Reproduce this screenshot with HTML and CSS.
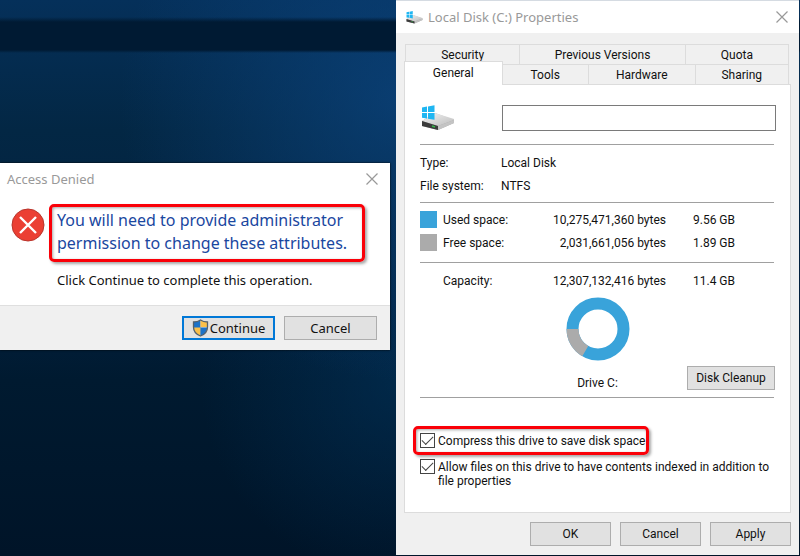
FILE: index.html
```html
<!DOCTYPE html>
<html lang="en">
<head>
<meta charset="utf-8">
<title>Local Disk (C:) Properties</title>
<link rel="stylesheet" href="styles.css">
</head>
<body>
<svg class="defs" aria-hidden="true">
  <defs>
    <linearGradient id="metal" x1="0" y1="0" x2="1" y2="1">
      <stop offset="0" stop-color="#f4f4f4"/><stop offset="1" stop-color="#bdbdbd"/>
    </linearGradient>
    <symbol id="drive" viewBox="0 0 34 26">
      <path d="M1 16 L14 8 L33 15 L33 18 L17 25 L1 21Z" fill="#aaa"/>
      <path d="M1 16 L14 8 L33 14 L33 15 L17 21Z" fill="url(#metal)"/>
      <path d="M17 21 L33 15 L33 18 L17 25Z" fill="#c4c4c4"/>
      <path d="M1 16 L17 21 L17 25 L1 21Z" fill="#3c3c3c"/>
      <path d="M11 21 L14 22" stroke="#35b54a" stroke-width="1.5"/>
      <path d="M1 2.5 L6 1.6 V7 H1Z M7 1.4 L13.500 0.200 V7 H7Z M1 8 H6 V13.500 L1 12.800Z M7 8 H13.500 V14.800 L7 13.700Z" fill="#1fb6f2"/>
    </symbol>
    <symbol id="close" viewBox="0 0 12 12">
      <path d="M.5 .5 L11.500 11.500 M11.500 .5 L.5 11.500" stroke="#999" stroke-width="1.200" fill="none"/>
    </symbol>
  </defs>
</svg>
<main class="desktop">
  <section class="window dialog" aria-label="Access Denied">
    <header class="dialog-title">
      <h1>Access Denied</h1>
      <button class="close" aria-label="Close"><svg><use href="#close"/></svg></button>
    </header>
    <div class="message">
      <svg class="error" viewBox="0 0 34 34" aria-hidden="true">
        <circle cx="17" cy="17" r="16" fill="#eb3f33" stroke="#b9352c"/>
        <path d="M9 9 L25 25 M25 9 L9 25" stroke="#fff" stroke-width="2.400"/>
      </svg>
      <div>
        <p class="headline highlight">You will need to provide administrator<br>permission to change these attributes.</p>
        <p class="detail">Click Continue to complete this operation.</p>
      </div>
    </div>
    <footer class="dialog-actions">
      <button class="button primary">
        <svg class="shield" viewBox="0 0 16 18" aria-hidden="true">
          <path d="M8 1 C6 2.500 4 3 1 3 V8 C1 12 4 15.500 8 17Z" fill="#1c72c8"/>
          <path d="M8 1 C10 2.500 12 3 15 3 V8 H8Z" fill="#fbc04a"/>
          <path d="M1 8.500 H8 V17 C4 15.500 1.300 12 1 8.500Z" fill="#fbc04a"/>
          <path d="M8 8.500 H15 C14.700 12 12 15.500 8 17Z" fill="#1c72c8"/>
          <path d="M8 1 C6 2.500 4 3 1 3 V8 C1 12 4 15.500 8 17 C12 15.500 15 12 15 8 V3 C12 3 10 2.500 8 1Z" fill="none" stroke="#54616c" stroke-width="1.300"/>
        </svg>Continue</button>
      <button class="button">Cancel</button>
    </footer>
  </section>

  <section class="window properties" aria-label="Local Disk (C:) Properties">
    <header class="prop-title">
      <svg class="drive-small" aria-hidden="true"><use href="#drive"/></svg>
      <h2>Local Disk (C:) Properties</h2>
      <button class="close" aria-label="Close"><svg><use href="#close"/></svg></button>
    </header>
    <div class="prop-body">
      <nav class="tabs" role="tablist">
        <div class="tab-row back">
          <button role="tab">Security</button><button role="tab">Previous Versions</button><button role="tab">Quota</button>
        </div>
        <div class="tab-row front">
          <button role="tab" aria-selected="true" class="active">General</button><button role="tab">Tools</button><button role="tab">Hardware</button><button role="tab">Sharing</button>
        </div>
      </nav>
      <div class="panel" role="tabpanel">
        <div class="name-row">
          <svg class="drive-large" aria-hidden="true"><use href="#drive"/></svg>
          <input type="text" aria-label="Volume label">
        </div>
        <hr>
        <dl class="facts">
          <dt>Type:</dt><dd>Local Disk</dd>
          <dt>File system:</dt><dd>NTFS</dd>
        </dl>
        <hr>
        <table class="space">
          <tr><td class="key"><span class="swatch used"></span></td><th>Used space:</th><td class="bytes">10,275,471,360 bytes</td><td class="size">9.56 GB</td></tr>
          <tr><td class="key"><span class="swatch free"></span></td><th>Free space:</th><td class="bytes">2,031,661,056 bytes</td><td class="size">1.89 GB</td></tr>
        </table>
        <hr>
        <table class="space capacity">
          <tr><td class="key"></td><th>Capacity:</th><td class="bytes">12,307,132,416 bytes</td><td class="size">11.4 GB</td></tr>
        </table>
        <div class="chart">
          <svg class="donut" viewBox="0 0 64 64" aria-hidden="true">
            <circle cx="32" cy="32" r="25.500" fill="none" stroke="#39a3da" stroke-width="12"/>
            <path d="M6.500 32 A25.500 25.500 0 0 0 19.250 54.080" fill="none" stroke="#ababab" stroke-width="12"/>
          </svg>
          <div class="drive-row">
            <span class="drive-name">Drive C:</span>
            <button class="button cleanup">Disk Cleanup</button>
          </div>
        </div>
        <hr>
        <div class="options">
          <label class="option highlight"><input type="checkbox" checked><span>Compress this drive to save disk space</span></label>
          <label class="option"><input type="checkbox" checked><span>Allow files on this drive to have contents indexed in addition to<br>file properties</span></label>
        </div>
      </div>
      <footer class="prop-actions">
        <button class="button">OK</button>
        <button class="button">Cancel</button>
        <button class="button">Apply</button>
      </footer>
    </div>
  </section>
</main>
</body>
</html>
```
FILE: styles.css
```css
* { box-sizing: border-box; }

body {
  margin: 0;
  font: 12px/14px Roboto, "Liberation Sans", sans-serif;
  color: #111;
}

h1, h2, p, dl, dd { margin: 0; }
button, input { font: inherit; color: inherit; }

.defs { position: absolute; width: 0; height: 0; }

.desktop {
  position: relative;
  min-height: 100vh;
  overflow: hidden;
  background:
    linear-gradient(transparent 17px, #001a33 22px, #001a33 50px, transparent 53px),
    radial-gradient(circle at 400px 100px, rgba(12, 70, 130, .7), transparent 280px),
    radial-gradient(circle at 400px 380px, rgba(2, 50, 90, .6), transparent 200px),
    linear-gradient(#05305a, #032744 130px, #02203e 300px, #001a30 380px, #001428);
}

.window { position: absolute; background: #fff; }

.close {
  margin-left: auto;
  padding: 0;
  border: 0;
  background: none;
  line-height: 0;
}
.close svg { width: 12px; height: 12px; }

.button {
  height: 24px;
  padding: 0;
  border: 1px solid #adadad;
  background: #e1e1e1;
}

.highlight {
  border: 3px solid #fa0008;
  border-radius: 5px;
  box-shadow: 2px 2px 3px rgba(0, 0, 0, .35), inset 1px 1px 3px rgba(0, 0, 0, .35);
}

/* Access Denied dialog */
.dialog {
  left: 0;
  top: 163px;
  width: 390px;
  font: 13px/16px "Noto Sans", "Open Sans", sans-serif;
  box-shadow: 0 0 2px #000;
}
.dialog-title {
  display: flex;
  align-items: center;
  height: 32px;
  padding: 0 12px 0 7px;
}
.dialog h1, .prop-title h2 {
  font: 13px/16px "Noto Sans", "Open Sans", sans-serif;
  color: #999;
}
.message {
  display: flex;
  gap: 4px;
  padding: 9px 25px 17px 11px;
}
.message > div { flex: 1; }
.error { flex: none; width: 34px; height: 34px; margin-top: 4px; }
.headline {
  padding: 2px 5px 4px;
  font-size: 16px;
  line-height: 23px;
  color: #1a479f;
  white-space: nowrap;
}
.detail { padding: 10px 8px 0; }
.dialog-actions {
  display: flex;
  justify-content: flex-end;
  gap: 9px;
  padding: 10px 13px;
  border-top: 1px solid #dfdfdf;
  background: #f0f0f0;
}
.dialog-actions .button {
  display: flex;
  align-items: center;
  justify-content: center;
  gap: 1px;
  width: 93px;
}
.dialog-actions .primary { border: 2px solid #0078d7; }
.shield { width: 17px; height: 18px; }

/* Drive properties */
.properties {
  left: 396px;
  right: 1px;
  top: 0;
  bottom: 1px;
  display: flex;
  flex-direction: column;
}
.prop-title {
  display: flex;
  align-items: center;
  height: 33px;
  padding: 0 11px 0 10px;
  border-top: 1px solid #d5dbe2;
}
.drive-small { width: 17px; height: 13px; margin-right: 5px; }
.prop-body {
  flex: 1;
  display: flex;
  flex-direction: column;
  padding: 11px 8px 9px;
  background: #f0f0f0;
}
.tabs { padding-right: 1px; }
.tab-row { display: grid; margin: 0 1px; }
.tab-row button {
  height: 20px;
  padding: 0;
  border: 1px solid #dcdcdc;
  border-width: 1px 1px 0 0;
  background: #f0f0f0;
}
.tab-row button:first-child { border-left-width: 1px; }
.back { grid-template-columns: 115fr 165fr 103fr; }
.front { grid-template-columns: 98fr 86fr 106fr 93fr; margin-left: 0; }
.tab-row .active {
  height: 24px;
  margin: -3px 0 -1px;
  padding-bottom: 2px;
  background: #fff;
  z-index: 1;
}
.panel {
  flex: 1;
  padding: 20px 15px 0;
  border: 1px solid #dcdcdc;
  background: #fff;
}
hr {
  height: 1px;
  margin: 0 1px 0 0;
  border: 0;
  background: #a0a0a0;
}
.name-row {
  display: flex;
  justify-content: space-between;
  align-items: center;
  height: 39px;
  padding-bottom: 13px;
}
.drive-large { width: 34px; height: 26px; margin-left: 1px; }
.name-row input {
  flex: none;
  width: 274px;
  height: 26px;
  margin-right: -1px;
  border: 1px solid #7a7a7a;
  background: #fff;
}
.facts {
  display: grid;
  grid-template-columns: 81px 1fr;
  padding: 7px 0 4px;
  line-height: 23px;
}
.space {
  width: 100%;
  margin: 5px 0 8px;
  border-collapse: collapse;
  table-layout: fixed;
}
.space td, .space th {
  height: 23px;
  padding: 0;
  font-weight: normal;
  text-align: left;
}
.space .key { width: 23px; }
.space th { width: 90px; }
.space .bytes { width: 133px; text-align: right; }
.space .size { padding-left: 27px; }
.capacity { margin: 6px 0 5px; }
.swatch { display: block; width: 17px; height: 17px; }
.used { background: #39a3da; }
.free { background: #ababab; }
.chart { padding-bottom: 7px; }
.donut { display: block; width: 64px; height: 64px; margin: 0 auto; }
.drive-row {
  display: grid;
  grid-template-columns: 1fr auto 1fr;
  align-items: end;
  margin-top: 5px;
}
.drive-name { grid-column: 2; }
.cleanup { justify-self: end; width: 88px; }
.options { padding-top: 28px; }
.option {
  display: flex;
  align-items: flex-start;
  gap: 3px;
}
.option.highlight {
  width: 236px;
  margin: 0 0 4px -7px;
  padding: 4px;
  white-space: nowrap;
}
.option span { padding-top: 1px; }
.option input {
  flex: none;
  appearance: none;
  display: grid;
  place-items: center;
  width: 15px;
  height: 15px;
  margin: 0;
  border: 1px solid #444;
  background: #fff;
}
.option input:checked::before {
  content: "";
  width: 10px;
  height: 5px;
  margin-bottom: 3px;
  border: solid #444;
  border-width: 0 0 1px 1px;
  rotate: -45deg;
}
.prop-actions {
  display: flex;
  justify-content: flex-end;
  gap: 9px;
  padding-top: 9px;
}
.prop-actions .button { width: 81px; }
```
